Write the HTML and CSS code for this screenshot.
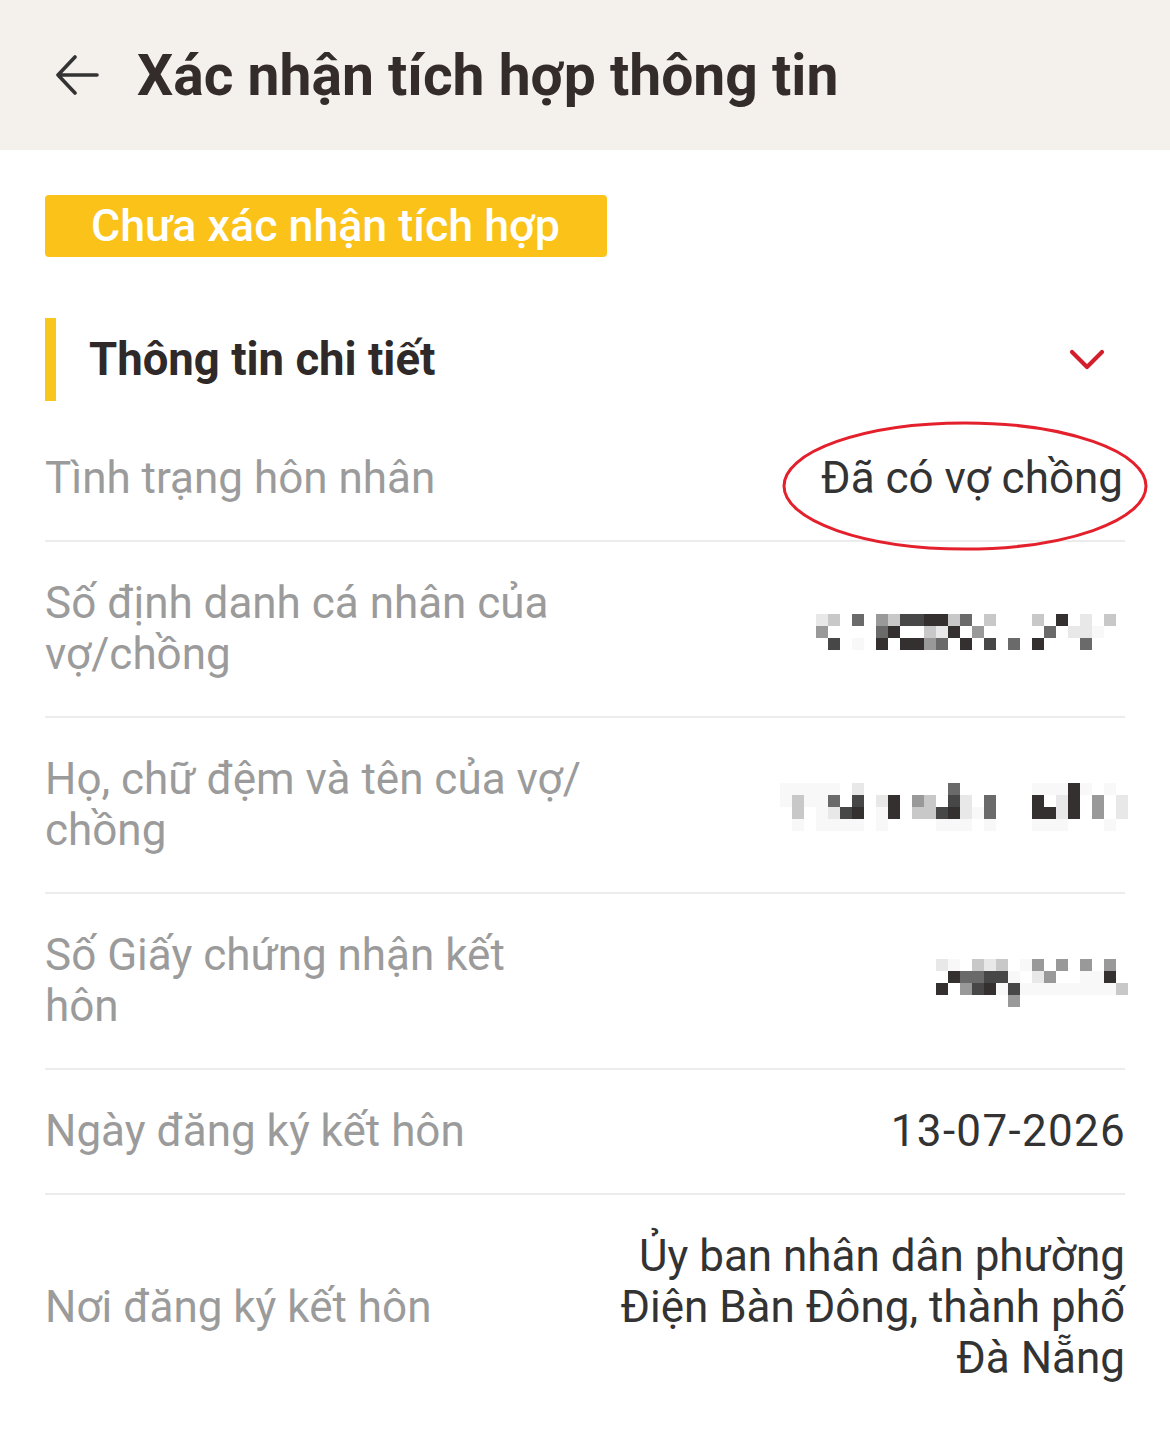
FILE: index.html
```html
<!DOCTYPE html>
<html lang="vi">
<head>
<meta charset="utf-8">
<title>Xác nhận tích hợp thông tin</title>
<link rel="stylesheet" href="styles.css">
</head>
<body>
<header class="topbar">
  <svg class="back" viewBox="0 0 44 40" width="44" height="40" aria-hidden="true">
    <path d="M42 20H3M20 2L3 20L20 38" fill="none" stroke="#333" stroke-width="3.6" stroke-linecap="round" stroke-linejoin="round"/>
  </svg>
  <h1 class="title">Xác nhận tích hợp thông tin</h1>
</header>
<main class="content">
  <div class="badge">Chưa xác nhận tích hợp</div>
  <div class="section-head">
    <h2 class="section-title">Thông tin chi tiết</h2>
    <svg class="chevron" viewBox="0 0 36 22" width="36" height="22" aria-hidden="true">
      <path d="M3 3L18 18L33 3" fill="none" stroke="#d21f2b" stroke-width="4.2" stroke-linecap="round" stroke-linejoin="round"/>
    </svg>
  </div>
  <div class="rows">
    <div class="row first">
      <div class="label">Tình trạng hôn nhân</div>
      <div class="value circled">Đã có vợ chồng
        <svg class="ring" viewBox="0 0 370 134" width="370" height="134" aria-hidden="true">
          <ellipse cx="185" cy="67" rx="181" ry="63" fill="none" stroke="#e3202b" stroke-width="3"/>
        </svg>
      </div>
    </div>
    <div class="row">
      <div class="label">Số định danh cá nhân của vợ/chồng</div>
      <div class="value">
        <div class="pix g25">
          <i class="k1"></i><i class="k2"></i><i></i><i class="k4"></i><i></i><i class="k3"></i><i class="k2"></i><i class="k5"></i><i class="k5"></i><i class="k6"></i><i class="k6"></i><i class="k2"></i><i class="k4"></i><i></i><i class="k2"></i><i></i><i></i><i></i><i class="k2"></i><i></i><i class="k6"></i><i></i><i class="k1"></i><i></i><i class="k2"></i>
          <i class="k3"></i><i></i><i></i><i></i><i></i><i class="k4"></i><i class="k6"></i><i></i><i></i><i class="k2"></i><i class="k1"></i><i class="k6"></i><i></i><i class="k3"></i><i></i><i></i><i></i><i></i><i></i><i class="k4"></i><i></i><i class="k1"></i><i class="k1"></i><i class="k0"></i><i></i>
          <i></i><i class="k5"></i><i></i><i class="k0"></i><i></i><i class="k6"></i><i></i><i class="k6"></i><i class="k6"></i><i class="k3"></i><i class="k4"></i><i></i><i class="k6"></i><i></i><i class="k5"></i><i></i><i class="k4"></i><i></i><i class="k6"></i><i></i><i></i><i></i><i class="k4"></i><i></i><i></i>
        </div>
      </div>
    </div>
    <div class="row">
      <div class="label">Họ, chữ đệm và tên của vợ/ chồng</div>
      <div class="value">
        <div class="pix g29">
          <i class="k0"></i><i class="k0"></i><i class="k0"></i><i class="k0"></i><i class="k0"></i><i></i><i class="k1"></i><i></i><i></i><i></i><i></i><i></i><i></i><i></i><i class="k4"></i><i></i><i></i><i></i><i></i><i></i><i></i><i class="k0"></i><i class="k0"></i><i class="k0"></i><i class="k6"></i><i class="k0"></i><i></i><i class="k0"></i><i></i>
          <i class="k0"></i><i class="k2"></i><i class="k0"></i><i class="k0"></i><i class="k4"></i><i></i><i class="k5"></i><i></i><i class="k1"></i><i class="k6"></i><i></i><i class="k3"></i><i class="k2"></i><i></i><i class="k5"></i><i class="k1"></i><i></i><i class="k4"></i><i></i><i></i><i></i><i class="k6"></i><i></i><i class="k1"></i><i class="k6"></i><i></i><i class="k3"></i><i></i><i class="k1"></i>
          <i></i><i class="k2"></i><i></i><i class="k0"></i><i class="k1"></i><i class="k5"></i><i class="k6"></i><i></i><i class="k0"></i><i class="k6"></i><i></i><i class="k2"></i><i class="k2"></i><i class="k5"></i><i class="k6"></i><i class="k1"></i><i class="k0"></i><i class="k4"></i><i></i><i></i><i></i><i class="k6"></i><i class="k6"></i><i class="k1"></i><i class="k6"></i><i></i><i class="k3"></i><i></i><i class="k1"></i>
          <i></i><i class="k0"></i><i></i><i class="k0"></i><i class="k0"></i><i class="k0"></i><i class="k0"></i><i></i><i class="k0"></i><i></i><i></i><i></i><i></i><i class="k0"></i><i class="k0"></i><i class="k0"></i><i></i><i class="k0"></i><i></i><i></i><i></i><i class="k0"></i><i class="k0"></i><i class="k0"></i><i></i><i></i><i></i><i class="k0"></i><i></i>
        </div>
      </div>
    </div>
    <div class="row">
      <div class="label">Số Giấy chứng nhận kết hôn</div>
      <div class="value">
        <div class="pix g16">
          <i class="k1"></i><i class="k0"></i><i></i><i class="k2"></i><i class="k1"></i><i class="k2"></i><i></i><i class="k0"></i><i class="k3"></i><i></i><i class="k3"></i><i></i><i class="k3"></i><i></i><i class="k3"></i><i></i>
          <i></i><i class="k6"></i><i class="k4"></i><i class="k4"></i><i class="k5"></i><i class="k5"></i><i class="k0"></i><i></i><i class="k1"></i><i class="k3"></i><i></i><i></i><i class="k0"></i><i class="k0"></i><i class="k6"></i><i></i>
          <i class="k6"></i><i></i><i class="k3"></i><i class="k5"></i><i class="k6"></i><i class="k0"></i><i class="k5"></i><i class="k0"></i><i class="k0"></i><i class="k0"></i><i class="k0"></i><i class="k0"></i><i class="k0"></i><i class="k0"></i><i class="k0"></i><i class="k2"></i>
          <i></i><i></i><i></i><i></i><i></i><i></i><i class="k3"></i><i></i><i></i><i></i><i></i><i></i><i></i><i></i><i></i><i></i>
        </div>
      </div>
    </div>
    <div class="row">
      <div class="label">Ngày đăng ký kết hôn</div>
      <div class="value date">13-07-2026</div>
    </div>
    <div class="row last">
      <div class="label">Nơi đăng ký kết hôn</div>
      <div class="value lines"><span>Ủy ban nhân dân phường</span><span>Điện Bàn Đông, thành phố</span><span>Đà Nẵng</span></div>
    </div>
  </div>
</main>
</body>
</html>
```

FILE: styles.css
```css
* { box-sizing: border-box; }
html, body { margin: 0; padding: 0; background: #ffffff; }
body {
  font-family: Roboto, "Noto Sans", "Liberation Sans", sans-serif;
  color: #333333;
  width: 1170px;
}
.topbar {
  height: 150px;
  background: #f4f0ec;
  display: flex;
  align-items: center;
  padding-left: 55px;
  gap: 38px;
}
.back { display: block; flex: none; margin-top: -1px; }
.title {
  margin: 0;
  font-size: 57px;
  font-weight: 700;
  color: #332c2b;
  line-height: 1;
}
.content { padding: 45px 45px 0 45px; }
.badge {
  display: inline-block;
  height: 62px;
  line-height: 62px;
  padding: 0 47px 0 46px;
  background: #fbc21a;
  color: #ffffff;
  font-size: 44.7px;
  font-weight: 500;
  border-radius: 4px;
}
.section-head {
  margin-top: 61px;
  height: 83px;
  border-left: 11px solid #f9c61f;
  display: flex;
  align-items: center;
  justify-content: space-between;
  padding-left: 33px;
  padding-right: 20px;
}
.section-title {
  margin: 0;
  font-size: 45.5px;
  font-weight: 700;
  color: #2f2a29;
}
.chevron { display: block; }
.rows { margin-top: 16px; }
.row {
  display: flex;
  justify-content: space-between;
  align-items: center;
  padding: 36px 0;
  border-bottom: 2px solid #ececec;
  font-size: 44px;
  line-height: 51px;
}
.row.last { border-bottom: none; }
.label {
  color: #9b9b9b;
  flex: 0 1 538px;
  min-width: 0;
}
.value {
  color: #333333;
  text-align: right;
  flex: 1 0 auto;
  position: relative;
}
.date { letter-spacing: 1.3px; margin-right: -1px; }
.lines span { display: block; white-space: nowrap; }
.circled { padding-right: 2px; }
.ring {
  position: absolute;
  right: -25px;
  top: -34px;
}
.pix {
  display: inline-grid;
  grid-auto-rows: 12px;
  vertical-align: middle;
}
.g25 { grid-template-columns: repeat(25, 12px); margin-right: 9px; }
.g29 { grid-template-columns: repeat(29, 12px); margin-right: -3px; }
.g16 { grid-template-columns: repeat(16, 12px); margin-right: -3px; }
.pix i { display: block; width: 12px; height: 12px; }
.k0 { background: #f8f8f8; }
.k1 { background: #e8e8e8; }
.k2 { background: #c8c8c8; }
.k3 { background: #999999; }
.k4 { background: #6a6a6a; }
.k5 { background: #474747; }
.k6 { background: #343030; }
```
